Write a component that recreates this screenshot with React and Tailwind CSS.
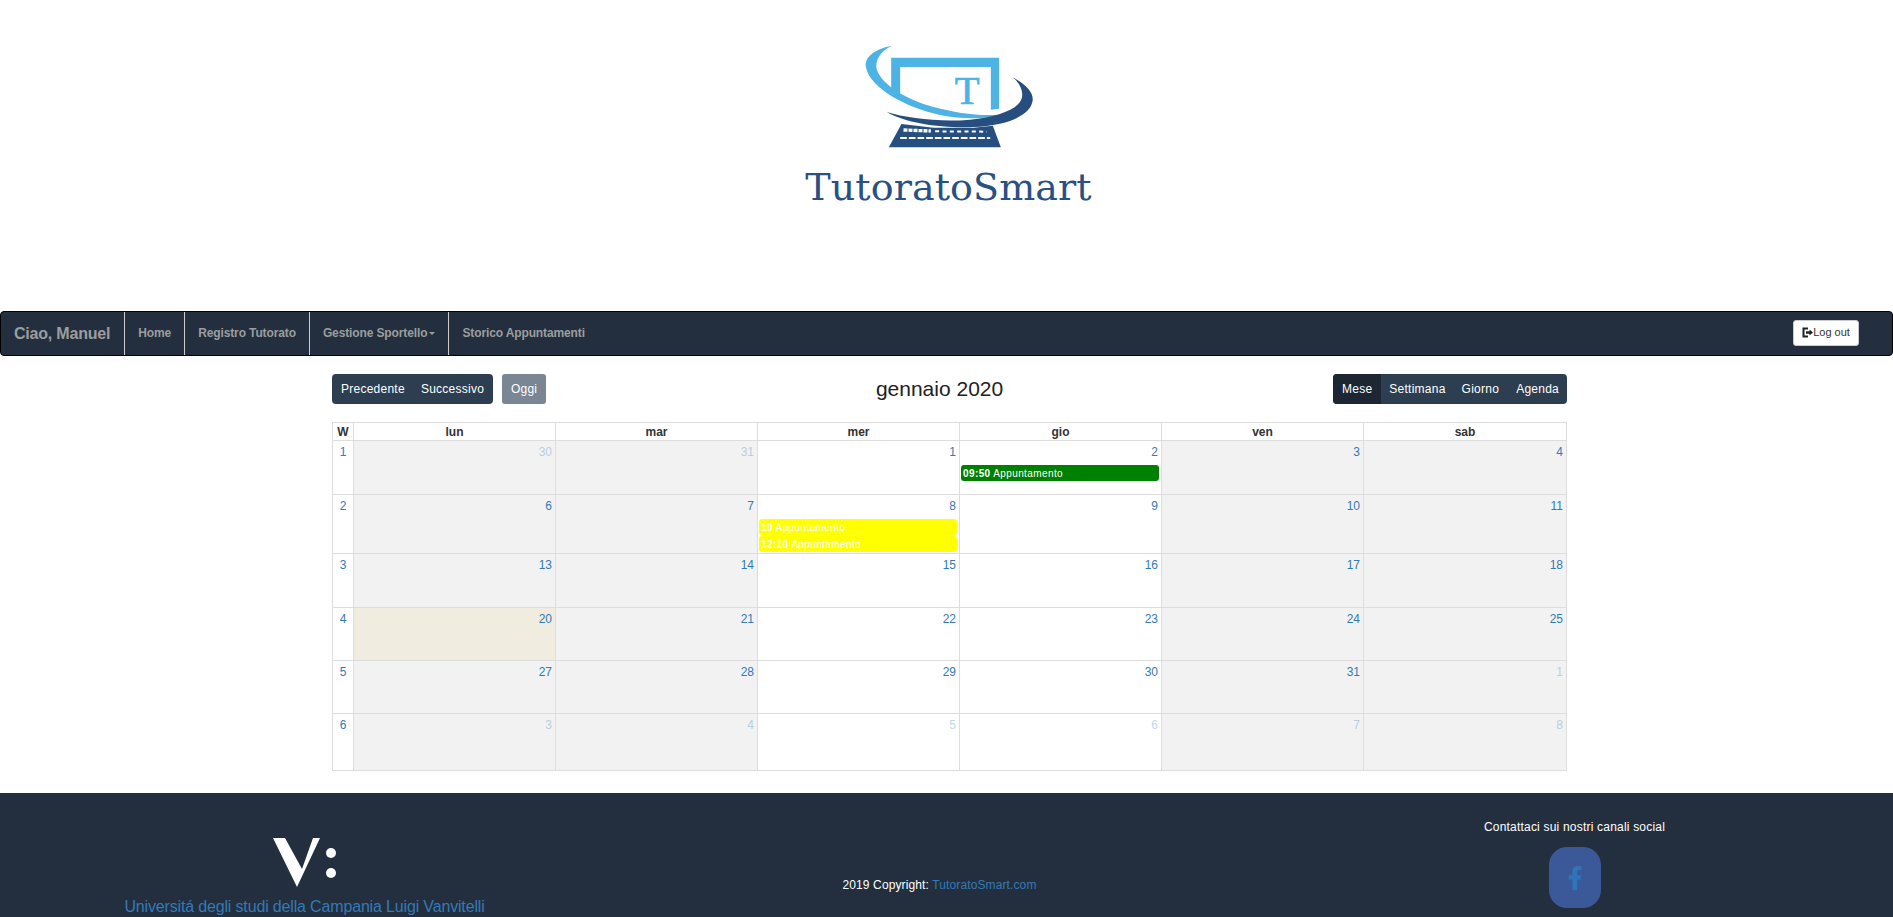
import { FaFacebookF } from "react-icons/fa"

const navItems = ["Home", "Registro Tutorato", "Gestione Sportello", "Storico Appuntamenti"]
const dayNames = ["lun", "mar", "mer", "gio", "ven", "sab"]
const greyColumns = [0, 1, 4, 5]

const weeks = [
  { w: 1, height: "h-[54px]", days: [{ d: 30, off: true }, { d: 31, off: true }, { d: 1 }, { d: 2, events: [{ time: "09:50", bg: "bg-[#008000]" }] }, { d: 3 }, { d: 4 }] },
  {
    w: 2,
    height: "h-[59px]",
    days: [
      { d: 6 },
      { d: 7 },
      { d: 8, events: [{ time: "10", bg: "bg-[#ffff00]" }, { time: "12:10", bg: "bg-[#ffff00]" }] },
      { d: 9 },
      { d: 10 },
      { d: 11 },
    ],
  },
  { w: 3, height: "h-[54px]", days: [{ d: 13 }, { d: 14 }, { d: 15 }, { d: 16 }, { d: 17 }, { d: 18 }] },
  { w: 4, height: "h-[53px]", days: [{ d: 20, today: true }, { d: 21 }, { d: 22 }, { d: 23 }, { d: 24 }, { d: 25 }] },
  { w: 5, height: "h-[53px]", days: [{ d: 27 }, { d: 28 }, { d: 29 }, { d: 30 }, { d: 31 }, { d: 1, off: true }] },
  { w: 6, height: "h-[57px]", days: [{ d: 3, off: true }, { d: 4, off: true }, { d: 5, off: true }, { d: 6, off: true }, { d: 7, off: true }, { d: 8, off: true }] },
]

const Logo = () => (
  <svg width="187" height="110" viewBox="285 40 560 330">
    <polygon fill="#4cb3e4" points="393,84 717,84 717,237 692,240 692,112 420,112 420,195 393,178" />
    <path fill="#4cb3e4" d="M395 48 C340 58 310 85 318 115 C330 172 430 232 540 256 C610 270 680 268 725 255 C650 260 590 250 520 232 C440 210 365 165 350 120 C342 90 365 62 395 48Z" />
    <path fill="#264f80" d="M757 143 C800 165 822 190 817 215 C810 258 740 288 640 292 C550 296 440 282 380 247 C440 266 540 278 630 270 C710 262 775 240 785 205 C790 185 780 160 757 143Z" />
    <polygon fill="#264f80" points="424,283 520,294 640,294 698,288 722,353 386,353" />
    <line x1="430" y1="301" x2="512" y2="304" stroke="#fff" strokeWidth="10" strokeDasharray="12 3" />
    <line x1="525" y1="305" x2="680" y2="306" stroke="#fff" strokeWidth="6" strokeDasharray="12 10" />
    <line x1="420" y1="325" x2="690" y2="325" stroke="#fff" strokeWidth="6" strokeDasharray="20 6" />
    <text x="621" y="222" textAnchor="middle" fill="#4cb3e4" stroke="#4cb3e4" strokeWidth="2" fontSize="122" fontFamily="'Liberation Serif', serif">T</text>
  </svg>
)

const VanvitelliLogo = () => (
  <svg width="68" height="50" viewBox="0 0 68 50" className="ml-[5px]">
    <polygon fill="#fff" points="0,0 12,0 29,31 40,0 47,0 24,49" />
    <circle cx="58" cy="15" r="5" fill="#fff" />
    <circle cx="58" cy="35" r="5" fill="#fff" />
  </svg>
)

const LogOutIcon = () => (
  <svg width="11" height="11" viewBox="0 0 11 11" className="shrink-0">
    <path d="M6 1.5H1.5v8H6" fill="none" stroke="#222" strokeWidth="2" />
    <path d="M4 4.2h3.5V2.4L11 5.5 7.5 8.6V6.8H4z" fill="#222" />
  </svg>
)

const Event = ({ time, bg }) => (
  <div className={`${bg} ml-[1px] mr-[2px] mb-px h-[16px] rounded-[3px] pl-[2px] pt-px text-[10px] leading-[15px] tracking-[0.4px] text-white whitespace-nowrap`}>
    <strong>{time}</strong> Appuntamento
  </div>
)

const DayCell = ({ day, grey }) => {
  const bg = day.today ? "bg-[#f0ede0]" : grey ? "bg-[#f2f2f2]" : "bg-white"
  return (
    <td className={`${bg} border border-[#dddddd] align-top p-0`}>
      <div className={`pr-[3px] pt-[3px] mb-[4px] text-right text-[12px] leading-[17px] text-[#337ab7] ${day.off ? "opacity-30" : ""}`}>
        {day.d}
      </div>
      {day.events?.map((ev, i) => <Event key={i} {...ev} />)}
    </td>
  )
}

export default function App() {
  return (
    <div className="font-['Liberation_Sans',Arial,sans-serif] text-[12px] text-[#333]">
      <header className="flex h-[311px] flex-col items-center pl-1 pt-[43px]">
        <Logo />
        <div className="mt-[9px] font-['DejaVu_Serif',serif] text-[38px] leading-[50px] tracking-[0.1px] text-[#2a5082]">
          TutoratoSmart
        </div>
      </header>

      <nav className="flex h-[45px] items-stretch rounded-[4px] border border-black bg-[#232f3e]">
        <div className="flex items-center pl-[13px] pr-[14px] text-[16px] font-bold tracking-[-0.2px] text-[#9d9d9d]">Ciao, Manuel</div>
        {navItems.map((item) => (
          <a key={item} className="flex items-center border-l border-[#cccccc] px-[13px] pb-[2px] text-[12px] font-bold tracking-[-0.12px] text-[#9d9d9d]">
            {item}
            {item === "Gestione Sportello" && (
              <span className="ml-[2px] mt-[2px] border-x-[3px] border-t-[3px] border-x-transparent border-t-[#9d9d9d]" />
            )}
          </a>
        ))}
        <div className="ml-auto flex items-center pb-[2px] pr-[33px]">
          <button className="flex h-[26px] w-[66px] items-center justify-center rounded-[3px] border border-[#cccccc] bg-white text-[11px] text-[#333]">
            <LogOutIcon />
            Log out
          </button>
        </div>
      </nav>

      <main className="ml-[332px] w-[1235px]">
        <div className="mt-[18px] mb-[18px] flex h-[30px] items-center tracking-[0.25px]">
          <div className="flex h-full items-center rounded-[4px] bg-[#2c3e50] px-[9px] text-white">
            <button>Precedente</button>
            <button className="ml-[16px]">Successivo</button>
          </div>
          <button className="ml-[9px] h-full w-[44px] rounded-[3px] bg-[#7a8694] text-white">Oggi</button>
          <div className="flex-1 text-center text-[21px] tracking-normal text-[#222]">gennaio 2020</div>
          <div className="flex h-full items-stretch overflow-hidden rounded-[4px] bg-[#2c3e50] text-white">
            <button className="bg-[#1c2733] px-[9px]">Mese</button>
            <button className="px-[8px]">Settimana</button>
            <button className="px-[8px]">Giorno</button>
            <button className="pl-[9px] pr-[8px]">Agenda</button>
          </div>
        </div>

        <table className="w-[1235px] table-fixed border-collapse">
          <colgroup>
            <col className="w-[21px]" />
            {dayNames.map((n) => <col key={n} className={n === "sab" ? "w-[203px]" : "w-[202px]"} />)}
          </colgroup>
          <thead>
            <tr className="h-[18px]">
              <th className="border border-[#dddddd] p-0 pt-px text-center text-[12px] leading-[15px] font-bold text-[#333]">W</th>
              {dayNames.map((n) => (
                <th key={n} className="border border-[#dddddd] p-0 pt-px text-center text-[12px] leading-[15px] font-bold text-[#333]">{n}</th>
              ))}
            </tr>
          </thead>
          <tbody>
            {weeks.map((week) => (
              <tr key={week.w} className={week.height}>
                <td className="border border-[#dddddd] bg-white p-0 pt-[3px] align-top text-center text-[12px] leading-[17px] text-[#337ab7]">{week.w}</td>
                {week.days.map((day, i) => (
                  <DayCell key={i} day={day} grey={greyColumns.includes(i)} />
                ))}
              </tr>
            ))}
          </tbody>
        </table>
      </main>

      <footer className="mt-[22px] h-[124px] overflow-hidden bg-[#232f3e] text-white">
        <div className="ml-[-13px] grid w-[1905px] grid-cols-3">
          <div className="flex flex-col items-center pt-[45px]">
            <VanvitelliLogo />
            <a className="mt-[10px] text-[16px] leading-[18px] tracking-[-0.16px] text-[#337ab7]">Universitá degli studi della Campania Luigi Vanvitelli</a>
          </div>
          <div className="pt-[85px] text-center leading-[14px] tracking-[0.12px]">
            2019 Copyright: <a className="text-[#337ab7]">TutoratoSmart.com</a>
          </div>
          <div className="flex flex-col items-center pt-[27px]">
            <div className="leading-[14px] tracking-[0.2px]">Contattaci sui nostri canali social</div>
            <a className="mt-[13px] flex h-[61px] w-[52px] items-center justify-center rounded-[18px] bg-[#3b5998] text-[24px] text-[#2f74b8]">
              <FaFacebookF />
            </a>
          </div>
        </div>
      </footer>
    </div>
  )
}
